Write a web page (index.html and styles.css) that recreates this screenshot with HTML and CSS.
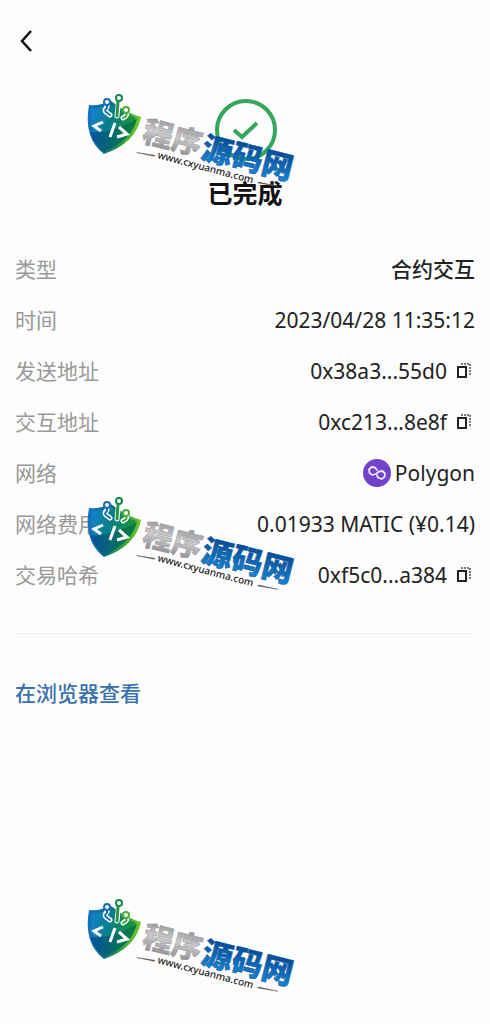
FILE: index.html
```html
<!DOCTYPE html>
<html lang="zh-CN">
<head>
<meta charset="utf-8">
<meta name="viewport" content="width=device-width, initial-scale=1">
<title>交易详情</title>
<link rel="stylesheet" href="styles.css">
</head>
<body>
<svg class="defs" aria-hidden="true">
  <defs>
    <linearGradient id="shield-rim" x1="0" y1="0" x2="1" y2="0.2">
      <stop offset="0" stop-color="#1673c4"/><stop offset="0.45" stop-color="#0c6a8c"/><stop offset="0.75" stop-color="#2f9d3c"/><stop offset="1" stop-color="#6cc52c"/>
    </linearGradient>
    <linearGradient id="shield-face" x1="0" y1="0" x2="1" y2="0.3">
      <stop offset="0" stop-color="#1583d6"/><stop offset="0.5" stop-color="#087f86"/><stop offset="1" stop-color="#1b9638"/>
    </linearGradient>
    <linearGradient id="shield-low" x1="0" y1="0" x2="1" y2="0">
      <stop offset="0" stop-color="#0750a0"/><stop offset="0.5" stop-color="#066a6c"/><stop offset="1" stop-color="#0b8038"/>
    </linearGradient>
    <linearGradient id="silver" x1="0" y1="0" x2="0" y2="1">
      <stop offset="0.1" stop-color="#858588"/><stop offset="0.5" stop-color="#cdcdcf"/><stop offset="0.9" stop-color="#8d8d91"/>
    </linearGradient>
    <linearGradient id="blue" x1="0" y1="0" x2="0" y2="1">
      <stop offset="0.15" stop-color="#07438c"/><stop offset="0.85" stop-color="#1683cf"/>
    </linearGradient>
    <symbol id="brand" viewBox="0 0 230 110">
      <path d="M14 20Q25 21 36 16Q51 28 66 32Q61 58 29 69Q8 53 14 20Z" fill="url(#shield-rim)"/>
      <path d="M17 23Q27 23 36 19Q49 29 61 33Q55 54 29 65Q13 49 17 23Z" fill="url(#shield-face)"/>
      <path d="M15 47Q35 49 62 34Q56 56 29 67Q20 60 15 47Z" fill="url(#shield-low)"/>
      <g fill="none" stroke-linecap="round" stroke-linejoin="round">
        <path d="M32 17V22Q29 25 31 27L35 30M44 13L42 31M51 25Q54 30 48 33" stroke="#fff" stroke-width="5"/>
        <path d="M32 20V23Q29 25 31 27L35 30" stroke="#1270b5" stroke-width="2"/>
        <path d="M43 17L42 31" stroke="#299443" stroke-width="3"/>
        <path d="M51 28Q53 31 48 33" stroke="#43a83a" stroke-width="2"/>
        <circle cx="32" cy="17" r="3" fill="#fff" stroke="#176db4" stroke-width="2"/>
        <circle cx="44" cy="13" r="3" fill="#fff" stroke="#14884b" stroke-width="2"/>
        <circle cx="51" cy="25" r="3" fill="#fff" stroke="#4bad38" stroke-width="2"/>
        <path d="M28 37L19 41L26 46M40 38L35 52M44 42L52 49L42 52" stroke="#fff" stroke-width="3" stroke-linecap="butt" stroke-linejoin="miter"/>
      </g>
      <g transform="translate(66 56) rotate(14)">
        <text class="brand-name" x="0" y="0" font-size="30" fill="url(#silver)" stroke="#98989b">程序</text>
        <text class="brand-name" x="61" y="2" font-size="31" fill="url(#blue)" stroke="#0c58a3">源码网</text>
      </g>
      <g transform="translate(82 73) rotate(15)">
        <text class="brand-url" x="0" y="0">www.cxyuanma.com</text>
        <path d="M-21 0L-3 -2V-1ZM104 -3L124 -4L104 -2Z" fill="#333" stroke="#666" stroke-width="0.5"/>
      </g>
    </symbol>
    <symbol id="copy" viewBox="0 0 14 16">
      <path d="M1 4H9V14H1Z" fill="none" stroke="#222" stroke-width="2"/>
      <path d="M4 1H13V12" fill="none" stroke="#777" stroke-width="2" stroke-dasharray="2 1"/>
    </symbol>
  </defs>
</svg>

<header class="topbar">
  <button class="back" type="button" aria-label="返回">
    <svg width="14" height="22" viewBox="0 0 14 22"><path d="M12 1L3 11L12 21" fill="none" stroke="#111" stroke-width="2.5"/></svg>
  </button>
</header>
<main class="page">
  <section class="status">
    <svg width="64" height="64" viewBox="0 0 64 64" aria-hidden="true">
      <circle cx="33" cy="32" r="29" fill="none" stroke="#35a65b" stroke-width="4"/>
      <path d="M21 32L29 39L44 25" fill="none" stroke="#35a65b" stroke-width="4"/>
    </svg>
    <h1>已完成</h1>
  </section>
  <dl class="details">
    <div class="row"><dt>类型</dt><dd class="han">合约交互</dd></div>
    <div class="row"><dt>时间</dt><dd>2023/04/28 11:35:12</dd></div>
    <div class="row"><dt>发送地址</dt><dd>0x38a3...55d0<button class="copy" type="button" aria-label="复制发送地址"><svg width="14" height="16"><use href="#copy"/></svg></button></dd></div>
    <div class="row"><dt>交互地址</dt><dd>0xc213...8e8f<button class="copy" type="button" aria-label="复制交互地址"><svg width="14" height="16"><use href="#copy"/></svg></button></dd></div>
    <div class="row"><dt>网络</dt><dd><svg class="coin" width="28" height="28" viewBox="0 0 28 28" aria-hidden="true"><circle cx="14" cy="14" r="14" fill="#7142ca"/><path d="M14 11L12 8.500L8.500 8L6 10.500L6.500 14L9.500 16L13 15L16 12.500L19.500 12L22 14.500L21.500 18L18.500 20L15 18.500L14 16.500" fill="none" stroke="#f0e4ff" stroke-width="1.800" stroke-linejoin="round" stroke-linecap="round"/></svg>Polygon</dd></div>
    <div class="row"><dt>网络费用</dt><dd>0.01933 MATIC (¥0.14)</dd></div>
    <div class="row"><dt>交易哈希</dt><dd>0xf5c0...a384<button class="copy" type="button" aria-label="复制交易哈希"><svg width="14" height="16"><use href="#copy"/></svg></button></dd></div>
  </dl>
  <footer class="more"><a href="#">在浏览器查看</a></footer>
</main>
<svg class="mark mark-top" width="230" height="110" aria-hidden="true"><use href="#brand"/></svg>
<svg class="mark mark-middle" width="230" height="110" aria-hidden="true"><use href="#brand"/></svg>
<svg class="mark mark-bottom" width="230" height="110" aria-hidden="true"><use href="#brand"/></svg>
</body>
</html>
```
FILE: styles.css
```css
* { box-sizing: border-box; }
body {
  position: relative;
  min-height: 100vh;
  margin: 0;
  background: #fdfdfd;
  color: #222;
  font-family: "Noto Sans", "Noto Sans CJK SC", sans-serif;
}
.defs { position: absolute; width: 0; height: 0; }
button { display: flex; padding: 0; border: 0; background: none; cursor: pointer; }
.topbar { padding: 30px 19px 0; }
.page { padding: 0 15px; }
.status {
  display: flex;
  flex-direction: column;
  align-items: center;
  gap: 12px;
  padding-top: 46px;
}
.status h1 {
  margin: 0;
  color: #111;
  font: 700 25px/36px "Noto Sans CJK SC", sans-serif;
}
.details { margin: 0; padding: 33px 0; border-bottom: 1px solid #f1f1f1; }
.row {
  display: flex;
  align-items: center;
  justify-content: space-between;
  height: 51px;
}
dt { padding-bottom: 2px; color: #999; font: 400 21px/30px "Noto Sans CJK SC", sans-serif; }
dd { display: flex; align-items: center; margin: 0; font-size: 21px; line-height: 30px; }
.han { padding-bottom: 2px; font-family: "Noto Sans CJK SC", sans-serif; font-weight: 500; }
.copy { margin: 0 4px 0 10px; }
.coin { margin-right: 4px; }
.more { padding-top: 43px; }
.more a {
  color: #3a70ae;
  font: 500 21px/30px "Noto Sans CJK SC", sans-serif;
  text-decoration: none;
}
.mark { position: absolute; left: 75px; pointer-events: none; }
.mark-top { top: 85px; }
.mark-middle { top: 488px; }
.mark-bottom { top: 890px; }
.brand-name { font-family: "Noto Sans CJK SC", sans-serif; font-weight: 900; stroke-width: 0.5px; }
.brand-url { fill: #222; font: 500 10px "Noto Sans", sans-serif; }
```
